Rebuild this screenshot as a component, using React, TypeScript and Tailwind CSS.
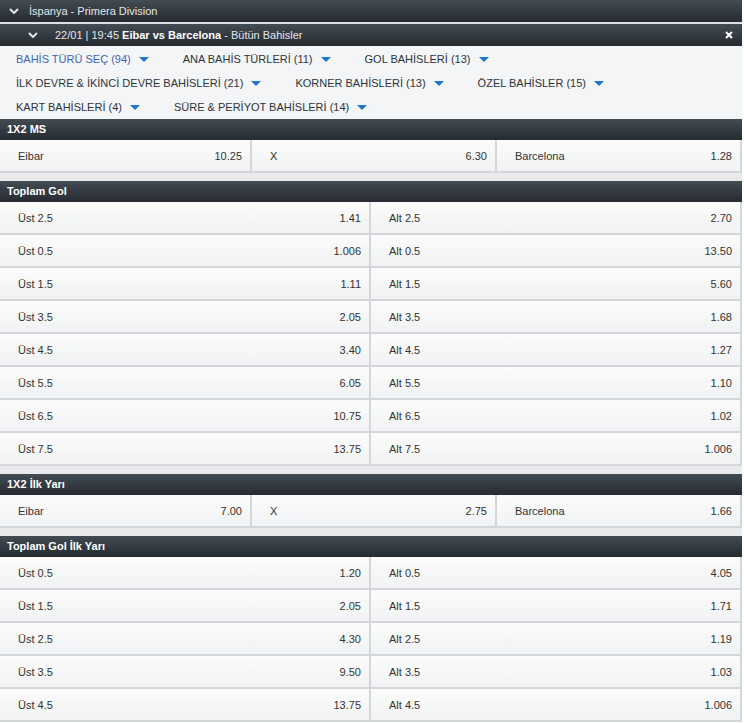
import React from "react";

type Cell = { label: string; odd: string };

const font = { fontFamily: '"Liberation Sans", Arial, sans-serif' };

function Chevron() {
  return (
    <svg width="10" height="6" viewBox="0 0 10 6" className="shrink-0">
      <path d="M1 1 L5 5 L9 1" fill="none" stroke="#e4e7ea" strokeWidth="2" />
    </svg>
  );
}

function Triangle() {
  return (
    <svg width="10" height="5" viewBox="0 0 10 5" className="shrink-0 ml-[8px]">
      <path d="M0 0 L10 0 L5 5 Z" fill="#1f76cf" />
    </svg>
  );
}

function SectionHeader({ title }: { title: string }) {
  return (
    <div className="h-[21px] flex items-center pl-[7px] bg-gradient-to-b from-[#434b53] to-[#262b31] text-white font-bold text-[11px]">
      {title}
    </div>
  );
}

function OddCell({ c }: { c: Cell }) {
  return (
    <div className="h-[33px] pt-[1px] flex items-center justify-between pl-[18px] pr-[8px] border-r-2 border-b-2 border-[#d3d7db] bg-gradient-to-b from-[#fcfcfc] to-[#f1f2f3] text-[11px] text-[#333]">
      <span>{c.label}</span>
      <span>{c.odd}</span>
    </div>
  );
}

function ThreeWay({ title, cells }: { title: string; cells: Cell[] }) {
  return (
    <div>
      <SectionHeader title={title} />
      <div className="grid grid-cols-[252px_245px_245px]">
        {cells.map((c, i) => (
          <OddCell key={i} c={c} />
        ))}
      </div>
    </div>
  );
}

function TwoWay({ title, rows }: { title: string; rows: [string, string, string, string][] }) {
  return (
    <div>
      <SectionHeader title={title} />
      <div className="grid grid-cols-2">
        {rows.map((r, i) => (
          <React.Fragment key={i}>
            <OddCell c={{ label: r[0], odd: r[1] }} />
            <OddCell c={{ label: r[2], odd: r[3] }} />
          </React.Fragment>
        ))}
      </div>
    </div>
  );
}

const filters = [
  "BAHİS TÜRÜ SEÇ (94)",
  "ANA BAHİS TÜRLERİ (11)",
  "GOL BAHİSLERİ (13)",
  "İLK DEVRE & İKİNCİ DEVRE BAHİSLERİ (21)",
  "KORNER BAHİSLERİ (13)",
  "ÖZEL BAHİSLER (15)",
  "KART BAHİSLERİ (4)",
  "SÜRE & PERİYOT BAHİSLERİ (14)",
];

export default function App() {
  return (
    <div className="w-[744px] h-[723px] bg-white overflow-hidden" style={font}>
      <div className="w-[742px] bg-[#e9eaeb]">
        <div className="h-[22px] flex items-center pl-[9px] gap-[10px] bg-gradient-to-b from-[#434b53] to-[#262b31] text-[11px] text-[#e3e6e9] border-b-2 border-[#dfe2e5] box-content">
          <Chevron />
          <span>İspanya - Primera Division</span>
        </div>
        <div className="h-[22px] flex items-center pl-[28px] pr-[9px] bg-gradient-to-b from-[#434b53] to-[#262b31] text-[11px] text-[#e3e6e9]">
          <Chevron />
          <span className="ml-[17px]">
            22/01 | 19:45 <b className="text-white">Eibar vs Barcelona</b> - Bütün Bahisler
          </span>
          <svg width="8" height="8" viewBox="0 0 8 8" className="ml-auto">
            <path d="M1 1 L7 7 M7 1 L1 7" stroke="#ffffff" strokeWidth="2" />
          </svg>
        </div>
        <div className="h-[73px] bg-[#f4f5f6] pl-[16px] pt-[1px] flex flex-wrap content-start gap-x-[34px] text-[11px] text-[#2d343b]">
          {filters.map((f, i) => (
            <div key={i} className="h-[24px] flex items-center">
              <span className={i === 0 ? "text-[#3d64b4]" : ""}>{f}</span>
              <Triangle />
            </div>
          ))}
        </div>
        <ThreeWay
          title="1X2 MS"
          cells={[
            { label: "Eibar", odd: "10.25" },
            { label: "X", odd: "6.30" },
            { label: "Barcelona", odd: "1.28" },
          ]}
        />
        <div className="h-[8px]" />
        <TwoWay
          title="Toplam Gol"
          rows={[
            ["Üst 2.5", "1.41", "Alt 2.5", "2.70"],
            ["Üst 0.5", "1.006", "Alt 0.5", "13.50"],
            ["Üst 1.5", "1.11", "Alt 1.5", "5.60"],
            ["Üst 3.5", "2.05", "Alt 3.5", "1.68"],
            ["Üst 4.5", "3.40", "Alt 4.5", "1.27"],
            ["Üst 5.5", "6.05", "Alt 5.5", "1.10"],
            ["Üst 6.5", "10.75", "Alt 6.5", "1.02"],
            ["Üst 7.5", "13.75", "Alt 7.5", "1.006"],
          ]}
        />
        <div className="h-[8px]" />
        <ThreeWay
          title="1X2 İlk Yarı"
          cells={[
            { label: "Eibar", odd: "7.00" },
            { label: "X", odd: "2.75" },
            { label: "Barcelona", odd: "1.66" },
          ]}
        />
        <div className="h-[8px]" />
        <TwoWay
          title="Toplam Gol İlk Yarı"
          rows={[
            ["Üst 0.5", "1.20", "Alt 0.5", "4.05"],
            ["Üst 1.5", "2.05", "Alt 1.5", "1.71"],
            ["Üst 2.5", "4.30", "Alt 2.5", "1.19"],
            ["Üst 3.5", "9.50", "Alt 3.5", "1.03"],
            ["Üst 4.5", "13.75", "Alt 4.5", "1.006"],
          ]}
        />
      </div>
    </div>
  );
}
